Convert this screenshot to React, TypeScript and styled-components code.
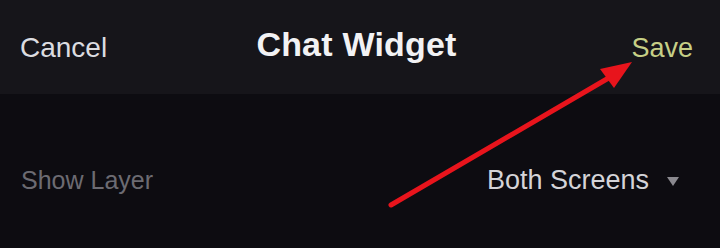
import React from "react";
import styled, { createGlobalStyle } from "styled-components";

const Global = createGlobalStyle`
  html, body { margin: 0; padding: 0; background: #0d0c11; }
  body { font-family: "Liberation Sans", Arial, sans-serif; }
  #root { width: 720px; height: 248px; overflow: hidden; }
`;

const Screen = styled.div`
  position: relative;
  width: 720px;
  height: 248px;
  background: #0d0c11;
`;

const Header = styled.header`
  height: 94px;
  background: #16151a;
  display: grid;
  grid-template-columns: 1fr auto 1fr;
  align-items: center;
  padding: 0 27px 0 20px;
  box-sizing: border-box;
`;

const NavButton = styled.span<{ $accent?: boolean; $align: "left" | "right" }>`
  font-size: ${(p) => (p.$accent ? 27 : 28)}px;
  color: ${(p) => (p.$accent ? "#c6cf86" : "#dcdce0")};
  justify-self: ${(p) => (p.$align === "left" ? "start" : "end")};
  margin-top: 2px;
`;

const Title = styled.h1`
  margin: 0 0 6px;
  font-size: 34px;
  font-weight: 700;
  color: #f2f2f4;
  letter-spacing: 0.2px;
`;

const Row = styled.div`
  margin-top: 56px;
  height: 60px;
  display: flex;
  align-items: center;
  justify-content: space-between;
  padding: 0 41px 0 21px;
`;

const Label = styled.span`
  font-size: 25px;
  color: #6c6b72;
`;

const Select = styled.div`
  display: flex;
  align-items: center;
  gap: 18px;
  font-size: 27px;
  color: #d4d4d8;
`;

const Caret = styled.span`
  width: 0;
  height: 0;
  border-left: 6px solid transparent;
  border-right: 6px solid transparent;
  border-top: 9px solid #8a898f;
  margin-top: 2px;
`;

const ArrowOverlay = styled.svg`
  position: absolute;
  left: 0;
  top: 0;
  pointer-events: none;
`;

export default function App() {
  return (
    <>
      <Global />
      <Screen>
        <Header>
          <NavButton $align="left">Cancel</NavButton>
          <Title>Chat Widget</Title>
          <NavButton $align="right" $accent>
            Save
          </NavButton>
        </Header>
        <Row>
          <Label>Show Layer</Label>
          <Select>
            Both Screens
            <Caret />
          </Select>
        </Row>
        <ArrowOverlay width="720" height="248" viewBox="0 0 720 248">
          <line x1="391" y1="205" x2="612" y2="76" stroke="#e8141c" strokeWidth="5" strokeLinecap="round" />
          <polygon points="632,62 600,69 614,88" fill="#e8141c" />
        </ArrowOverlay>
      </Screen>
    </>
  );
}
